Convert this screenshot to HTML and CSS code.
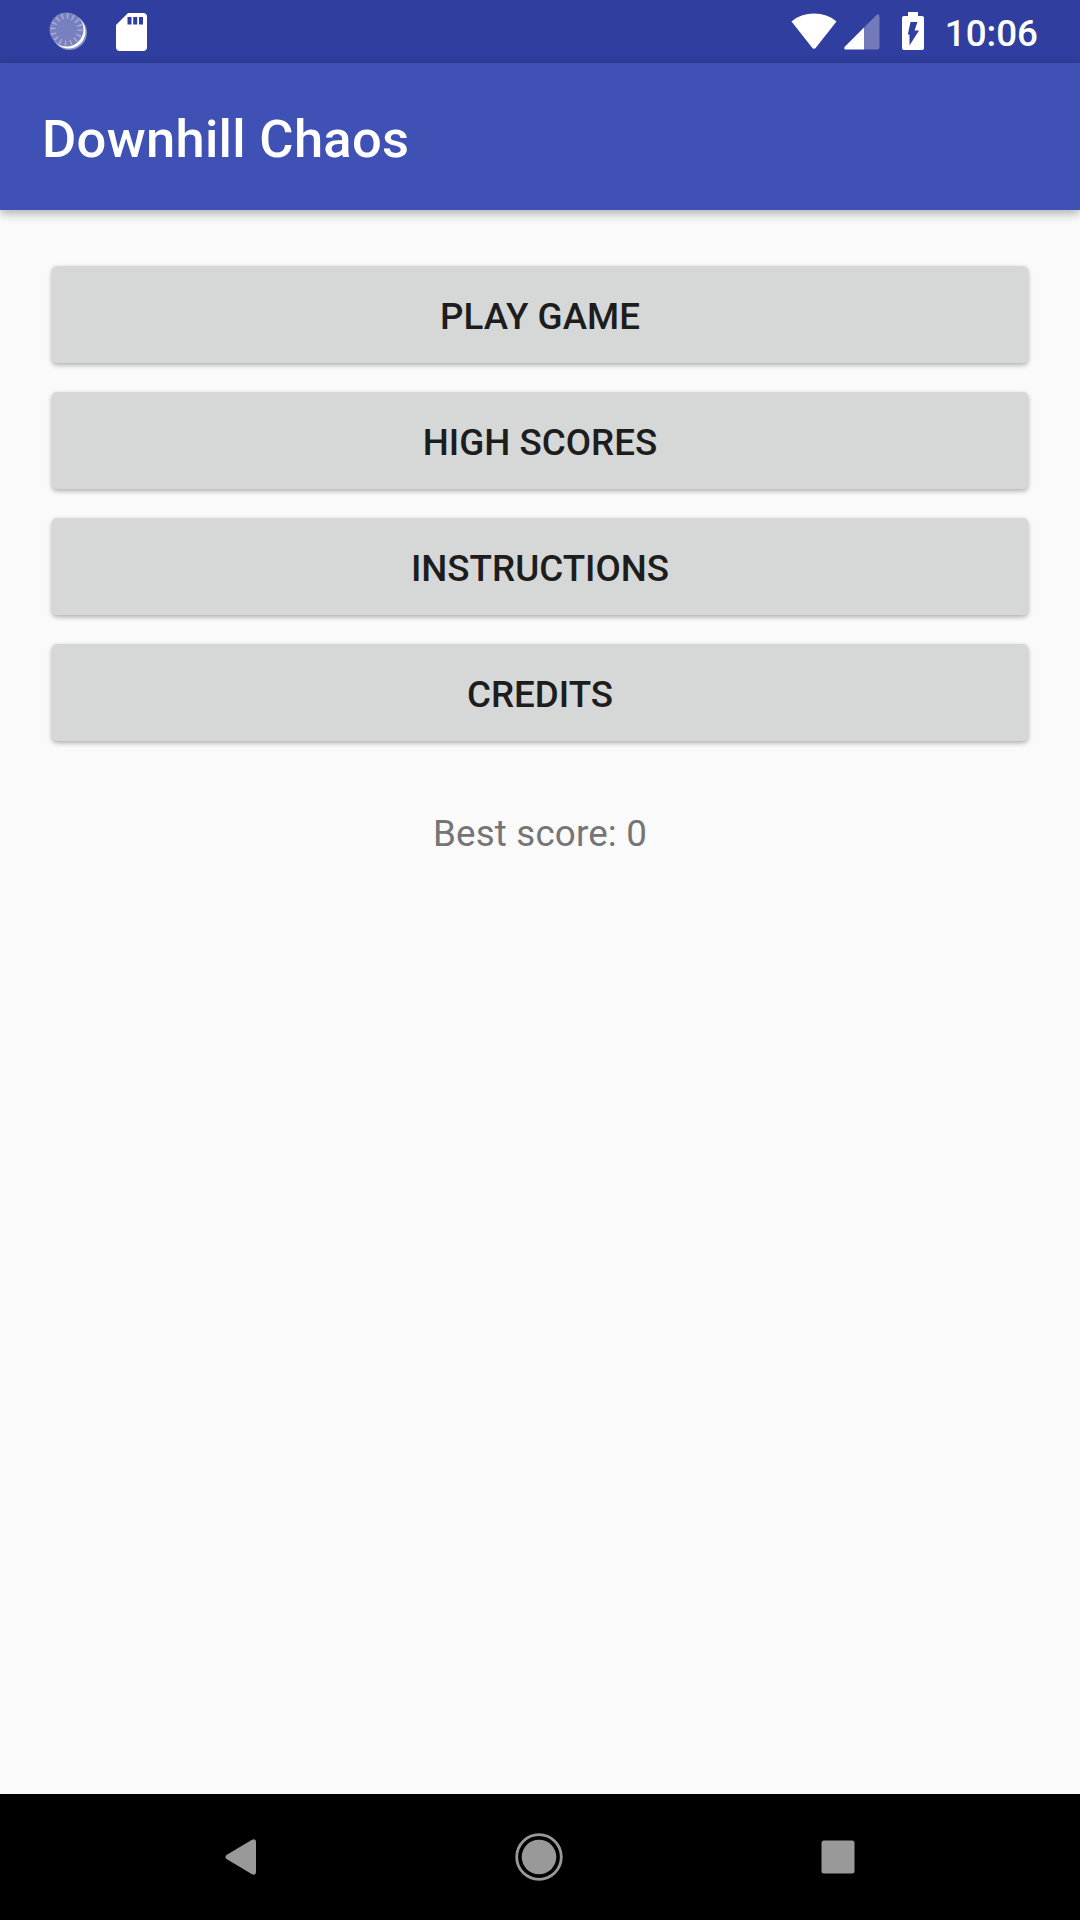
FILE: index.html
```html
<!DOCTYPE html>
<html lang="en">
<head>
<meta charset="utf-8">
<title>Downhill Chaos</title>
<link rel="stylesheet" href="styles.css">
</head>
<body>
<header class="status-bar">
  <div class="status-group">
    <svg class="icon-sync" width="40" height="40" viewBox="0 0 40 40">
      <circle cx="20.5" cy="20.5" r="17.5" fill="#8990c8"/>
      <circle cx="19.5" cy="19.5" r="17" fill="#fff"/>
      <circle cx="17.5" cy="17.5" r="17" fill="#7980bf"/>
      <circle cx="17.5" cy="17.5" r="13.5" fill="none" stroke="#a5aad5" stroke-width="5.5" stroke-dasharray="1.6 3.7"/>
    </svg>
    <svg class="icon-card" width="31" height="38" viewBox="0 0 31 38">
      <path fill="#fff" d="M12 0H27Q31 0 31 4V34Q31 38 27 38H4Q0 38 0 34V12Z"/>
      <path fill="#303f9f" d="M11.5 4H15.5V11.5H11.5ZM17.2 4H21.2V11.5H17.2ZM23 4H27V11.5H23Z"/>
    </svg>
  </div>
  <div class="status-group">
    <svg class="icon-wifi" width="46" height="37" viewBox="0 0 46 37">
      <path fill="#fff" d="M.5 8.5C12-2.2 34-2.2 45.5 8.5L25 34.6Q23 37 21 34.6Z"/>
    </svg>
    <svg class="icon-signal" width="36" height="36" viewBox="0 0 36 36">
      <path fill="#727abc" d="M20 13.5 32.5 1Q35.5-1 35.5 3V33Q35.5 35.5 33 35.5H20Z"/>
      <path fill="#fff" d="M20 13.5V35.5H2Q-1 35.5 1 32.5Z"/>
    </svg>
    <svg class="icon-battery" width="22" height="38" viewBox="0 0 22 38">
      <path fill="#fff" d="M6 0H16V4H20Q22 4 22 6V36Q22 38 20 38H2Q0 38 0 36V6Q0 4 2 4H6Z"/>
      <path fill="#303f9f" d="M8.5 10H15.500L12.5 18.500H17L7.500 33.500V22.500H5.800Z"/>
    </svg>
    <span class="clock">10:06</span>
  </div>
</header>
<div class="app-bar"><h1 class="title">Downhill Chaos</h1></div>
<main class="menu">
  <button class="menu-button">PLAY GAME</button>
  <button class="menu-button">HIGH SCORES</button>
  <button class="menu-button">INSTRUCTIONS</button>
  <button class="menu-button">CREDITS</button>
  <p class="best-score">Best score: 0</p>
</main>
<nav class="nav-bar">
  <svg class="nav-back" width="32" height="36" viewBox="0 0 32 36">
    <path fill="#999" d="M1.500 16 27 .8Q31-.7 31 3V33Q31 36.700 27 35.200L1.500 20Q-.7 18 1.500 16Z"/>
  </svg>
  <svg class="nav-home" width="48" height="48" viewBox="0 0 48 48">
    <circle cx="24" cy="24" r="22.3" fill="none" stroke="#999" stroke-width="2.8"/>
    <circle cx="24" cy="24" r="17.3" fill="#999"/>
  </svg>
  <svg class="nav-recent" width="34" height="34" viewBox="0 0 34 34">
    <rect x=".5" y=".5" width="33" height="33" rx="2.5" fill="#999"/>
  </svg>
</nav>
</body>
</html>
```
FILE: styles.css
```css
* { box-sizing: border-box; }
body {
  margin: 0;
  height: 1920px;
  display: flex;
  flex-direction: column;
  background: #fafafa;
  font-family: Roboto, sans-serif;
  font-size: 36.75px;
  overflow: hidden;
}
svg { display: block; flex: none; }
.status-bar {
  height: 63px;
  flex: none;
  display: flex;
  justify-content: space-between;
  padding: 12px 42px 0 49px;
  background: #303f9f;
}
.status-group { display: flex; align-items: flex-start; }
.icon-card { margin: 1px 0 0 27px; }
.icon-wifi { margin-top: 1px; }
.icon-signal { margin: 2px 0 0 7px; }
.icon-battery { margin-left: 22px; }
.clock {
  margin-left: 21px;
  line-height: 43px;
  font-weight: 500;
  color: #fff;
}
.app-bar {
  height: 147px;
  flex: none;
  display: flex;
  align-items: center;
  padding: 4px 42px 0;
  background: #3f51b5;
  box-shadow: 0 3px 10px rgba(0, 0, 0, .33);
}
.title {
  margin: 0;
  font-size: 52.5px;
  font-weight: 500;
  letter-spacing: .3px;
  color: #fff;
}
.menu {
  flex: 1;
  display: flex;
  flex-direction: column;
  gap: 29px;
  padding: 56px 52px 0;
}
.menu-button {
  height: 97px;
  padding: 4px 0 0;
  border: 0;
  border-radius: 5px;
  background: #d6d8d7;
  box-shadow: 0 2px 5px rgba(0, 0, 0, .32);
  font: 500 36.75px Roboto, sans-serif;
  color: #1d1d1d;
}
.best-score {
  margin: 42px 0 0;
  line-height: 43px;
  letter-spacing: .15px;
  text-align: center;
  color: #757575;
}
.nav-bar {
  height: 126px;
  flex: none;
  display: flex;
  align-items: center;
  padding: 0 225px;
  background: #000;
}
.nav-home { margin-left: 258px; }
.nav-recent { margin-left: 258px; }
```
